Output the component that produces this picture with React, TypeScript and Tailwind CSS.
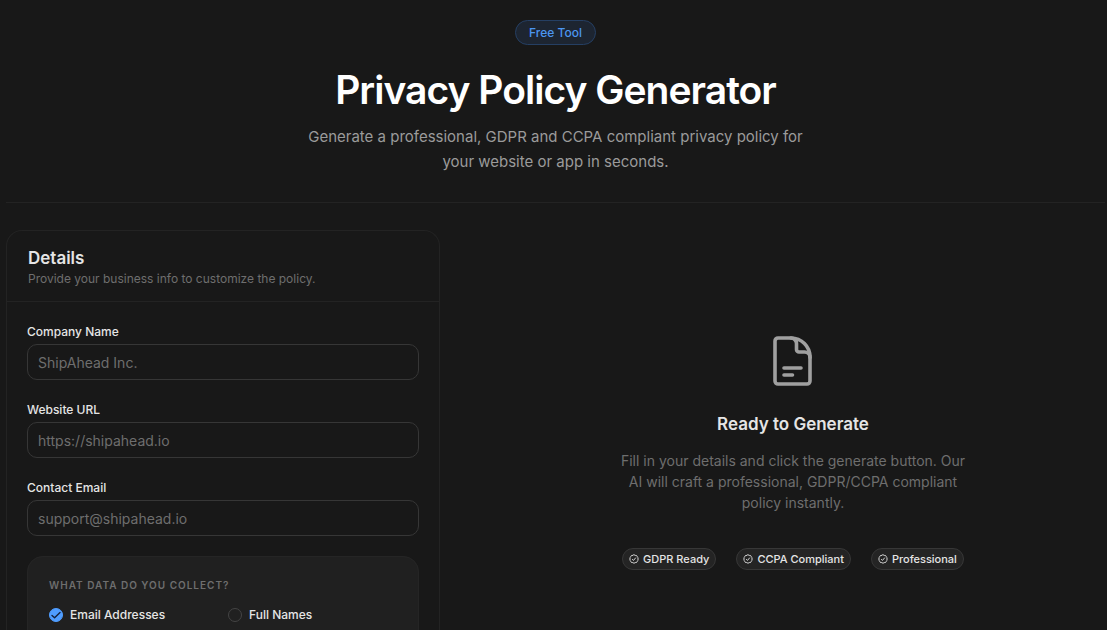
import { useState } from 'react';

const fields = [
  { id: 'company', label: 'Company Name', type: 'text', placeholder: 'ShipAhead Inc.' },
  { id: 'website', label: 'Website URL', type: 'url', placeholder: 'https://shipahead.io' },
  { id: 'email', label: 'Contact Email', type: 'email', placeholder: 'support@shipahead.io' },
];

const dataTypes = ['Email Addresses', 'Full Names'];

const badges = ['GDPR Ready', 'CCPA Compliant', 'Professional'];

function DocumentIcon() {
  return (
    <svg className="w-10 h-[50px]" viewBox="0 0 40 50" fill="none" stroke="currentColor" strokeWidth={3.6} strokeLinecap="round" strokeLinejoin="round" aria-hidden="true">
      <path d="M18 2H5a3 3 0 0 0-3 3v40a3 3 0 0 0 3 3h29a3 3 0 0 0 3-3V21C37 10.500 28.500 2 18 2z" />
      <path d="M18 2a5.500 5.500 0 0 1 5.500 5.500v6a2.500 2.500 0 0 0 2.500 2.500h5.500a5.500 5.500 0 0 1 5.500 5.500" />
      <path d="M11 32h17M11 39h8.500" />
    </svg>
  );
}

function BadgeCheckIcon() {
  return (
    <svg className="size-[10px]" viewBox="0 0 20 20" fill="none" stroke="currentColor" strokeWidth={1.8} strokeLinecap="round" strokeLinejoin="round" aria-hidden="true">
      <path d="M10 1.500l2.400 1.300 2.700.2 1.200 2.400 2 1.900-.5 2.700.5 2.700-2 1.900-1.200 2.400-2.700.2L10 18.500l-2.400-1.300-2.700-.2-1.200-2.400-2-1.900.5-2.700-.5-2.700 2-1.900L4.900 3l2.700-.2z" />
      <path d="M6.800 10.800l2.200 2 4.200-5" />
    </svg>
  );
}

function DataCheckbox({ label, defaultChecked }: { label: string; defaultChecked: boolean }) {
  const [checked, setChecked] = useState(defaultChecked);

  return (
    <label className="flex items-center gap-[7px] text-xs leading-5 font-medium text-[#e5e5e5]">
      <span className="relative flex">
        <input
          type="checkbox"
          checked={checked}
          onChange={(e) => setChecked(e.target.checked)}
          className="appearance-none size-[14px] rounded-full border border-[#444444] checked:border-[#4f9dff] checked:bg-[#4f9dff]"
        />
        {checked && (
          <svg className="absolute inset-0 size-[14px] pointer-events-none" viewBox="0 0 14 14" fill="none" stroke="#14213a" strokeWidth={1.4} strokeLinecap="round" strokeLinejoin="round">
            <path d="M3 7.500l2.600 2.300L11 4.500" />
          </svg>
        )}
      </span>
      {label}
    </label>
  );
}

export default function App() {
  return (
    <div className="min-h-screen bg-[#181818] pl-1.5 pr-0.5 pt-5 font-['Inter',sans-serif] text-[#e5e5e5]">
      <header className="flex flex-col items-center border-b border-[#232323] pb-7 text-center">
        <span className="rounded-full border border-[#253f63] bg-[#1d2531] px-[13px] py-0.5 text-xs leading-[19px] font-medium text-[#4c96f0]">
          Free Tool
        </span>
        <h1 className="mt-5 text-[39px] leading-[50px] font-semibold tracking-tight text-white">
          Privacy Policy Generator
        </h1>
        <p className="mt-[9px] max-w-[520px] text-[15px] leading-[25px] text-[#9b9b9b]">
          Generate a professional, GDPR and CCPA compliant privacy policy for your website or app in seconds.
        </p>
      </header>

      <main className="mt-[27px] grid grid-cols-12 gap-[41px]">
        <section className="col-span-5 rounded-t-2xl border border-b-0 border-[#232323]">
          <div className="border-b border-[#232323] px-[21px] pt-4 pb-3">
            <h2 className="text-[17px] leading-[22px] font-semibold">Details</h2>
            <p className="text-xs leading-5 text-[#6e6e6e]">
              Provide your business info to customize the policy.
            </p>
          </div>

          <form className="flex flex-col gap-5 px-5 pt-5 pb-6">
            {fields.map((field) => (
              <div key={field.id} className="flex flex-col gap-0.5">
                <label htmlFor={field.id} className="text-xs leading-5 font-medium">
                  {field.label}
                </label>
                <input
                  id={field.id}
                  type={field.type}
                  placeholder={field.placeholder}
                  className="h-9 w-full rounded-[10px] border border-[#363636] bg-transparent px-2.5 text-sm placeholder:text-[#6e6e6e] outline-none"
                />
              </div>
            ))}

            <fieldset className="rounded-2xl border border-[#252525] bg-[#202020] px-[21px] pt-5 pb-6">
              <p className="text-[10px] leading-4 font-semibold tracking-widest text-[#6e6e6e]">
                WHAT DATA DO YOU COLLECT?
              </p>
              <div className="mt-3 grid grid-cols-2 gap-2.5">
                {dataTypes.map((type, i) => (
                  <DataCheckbox key={type} label={type} defaultChecked={i === 0} />
                ))}
              </div>
            </fieldset>
          </form>
        </section>

        <section className="col-span-7 flex flex-col items-center pt-[106px] text-center">
          <div className="text-[#a0a0a0]">
            <DocumentIcon />
          </div>
          <h2 className="mt-6 text-[17px] leading-7 font-semibold">Ready to Generate</h2>
          <p className="mt-3 max-w-[350px] text-sm leading-[21px] text-[#6e6e6e]">
            Fill in your details and click the generate button. Our AI will craft a professional, GDPR/CCPA compliant policy instantly.
          </p>
          <ul className="mt-[35px] flex gap-5">
            {badges.map((badge) => (
              <li key={badge} className="flex items-center gap-1 rounded-full border border-[#373737] bg-[#242424] px-1.5 text-[11px] leading-5 font-medium">
                <BadgeCheckIcon />
                {badge}
              </li>
            ))}
          </ul>
        </section>
      </main>
    </div>
  );
}
